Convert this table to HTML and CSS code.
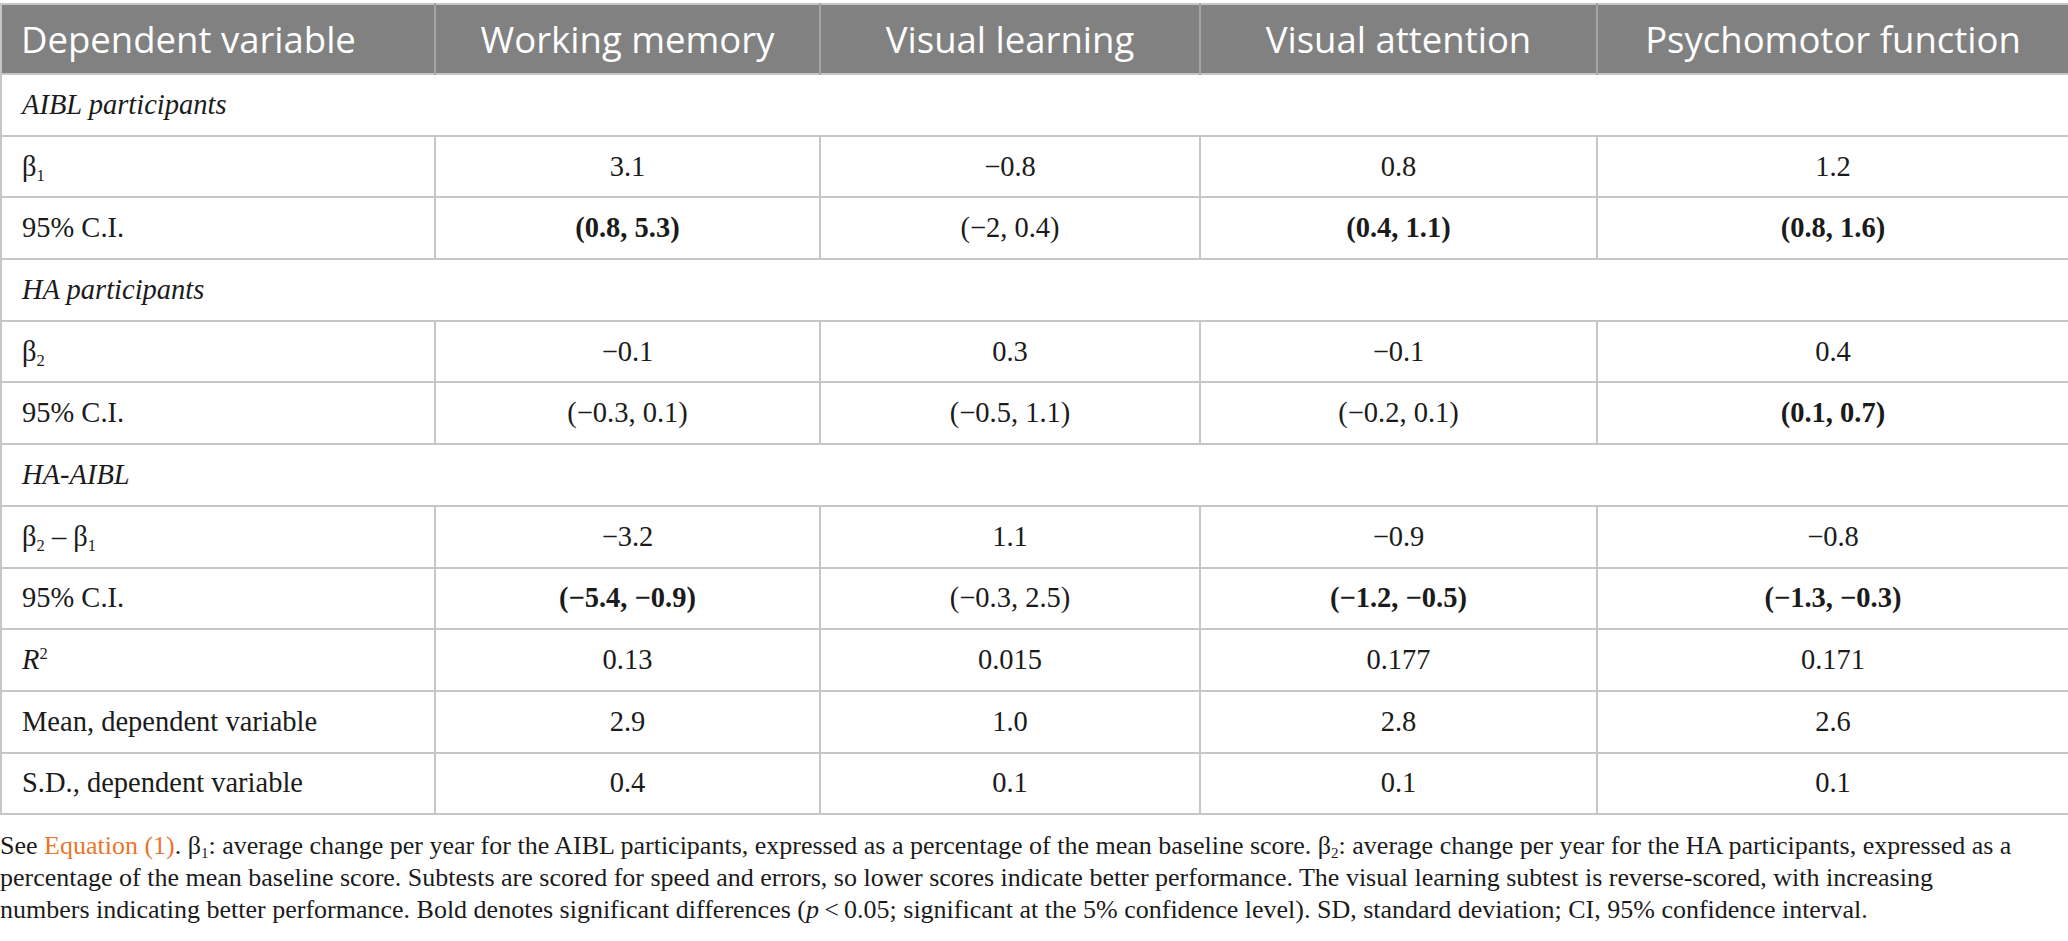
FILE: index.html
```html
<!DOCTYPE html>
<html lang="en">
<head>
    <meta charset="UTF-8">
    <meta name="viewport" content="width=device-width, initial-scale=1.0">
    <title>Table: annual change by subtest</title>
    <link rel="stylesheet" href="styles.css">
</head>
<body>
    <div class="table-wrap">
        <table class="data-table">
            <colgroup>
                <col class="col-label">
                <col class="col-wm">
                <col class="col-vl">
                <col class="col-va">
                <col class="col-pf">
            </colgroup>
            <thead>
                <tr>
                    <th class="first">Dependent variable</th>
                    <th>Working memory</th>
                    <th>Visual learning</th>
                    <th>Visual attention</th>
                    <th>Psychomotor function</th>
                </tr>
            </thead>
            <tbody>
                <!-- AIBL -->
                <tr class="section">
                    <td colspan="5">AIBL participants</td>
                </tr>
                <tr>
                    <td class="label">&beta;<sub>1</sub></td>
                    <td>3.1</td>
                    <td>&minus;0.8</td>
                    <td>0.8</td>
                    <td>1.2</td>
                </tr>
                <tr>
                    <td class="label">95% C.I.</td>
                    <td><b>(0.8, 5.3)</b></td>
                    <td>(&minus;2, 0.4)</td>
                    <td><b>(0.4, 1.1)</b></td>
                    <td><b>(0.8, 1.6)</b></td>
                </tr>

                <!-- HA -->
                <tr class="section">
                    <td colspan="5">HA participants</td>
                </tr>
                <tr>
                    <td class="label">&beta;<sub>2</sub></td>
                    <td>&minus;0.1</td>
                    <td>0.3</td>
                    <td>&minus;0.1</td>
                    <td>0.4</td>
                </tr>
                <tr>
                    <td class="label">95% C.I.</td>
                    <td>(&minus;0.3, 0.1)</td>
                    <td>(&minus;0.5, 1.1)</td>
                    <td>(&minus;0.2, 0.1)</td>
                    <td><b>(0.1, 0.7)</b></td>
                </tr>

                <!-- HA-AIBL -->
                <tr class="section">
                    <td colspan="5">HA-AIBL</td>
                </tr>
                <tr>
                    <td class="label">&beta;<sub>2</sub> &ndash; &beta;<sub>1</sub></td>
                    <td>&minus;3.2</td>
                    <td>1.1</td>
                    <td>&minus;0.9</td>
                    <td>&minus;0.8</td>
                </tr>
                <tr>
                    <td class="label">95% C.I.</td>
                    <td><b>(&minus;5.4, &minus;0.9)</b></td>
                    <td>(&minus;0.3, 2.5)</td>
                    <td><b>(&minus;1.2, &minus;0.5)</b></td>
                    <td><b>(&minus;1.3, &minus;0.3)</b></td>
                </tr>
                <tr>
                    <td class="label"><i>R</i><sup>2</sup></td>
                    <td>0.13</td>
                    <td>0.015</td>
                    <td>0.177</td>
                    <td>0.171</td>
                </tr>
                <tr>
                    <td class="label">Mean, dependent variable</td>
                    <td>2.9</td>
                    <td>1.0</td>
                    <td>2.8</td>
                    <td>2.6</td>
                </tr>
                <tr>
                    <td class="label">S.D., dependent variable</td>
                    <td>0.4</td>
                    <td>0.1</td>
                    <td>0.1</td>
                    <td>0.1</td>
                </tr>
            </tbody>
        </table>
    </div>

    <p class="footnote">See <a href="#" class="eq-link">Equation (1)</a>. &beta;<sub>1</sub>: average change per year for the AIBL participants, expressed as a percentage of the mean baseline score. &beta;<sub>2</sub>: average change per year for the HA participants, expressed as a<br>percentage of the mean baseline score. Subtests are scored for speed and errors, so lower scores indicate better performance. The visual learning subtest is reverse-scored, with increasing<br>numbers indicating better performance. Bold denotes significant differences (<i>p</i>&thinsp;&lt;&thinsp;0.05; significant at the 5% confidence level). SD, standard deviation; CI, 95% confidence interval.</p>
</body>
</html>
```

FILE: styles.css
```css
* {
    margin: 0;
    padding: 0;
    box-sizing: border-box;
}

body {
    font-family: 'Liberation Serif', 'Times New Roman', serif;
    color: #1b1b1b;
    background: #ffffff;
    padding-top: 3px;
}

/* テーブル */
.table-wrap {
    width: 2068px;
}

.data-table {
    width: 2068px;
    table-layout: fixed;
    border-collapse: collapse;
    border: 2px solid #c6c6c6;
}

.col-label { width: 434px; }
.col-wm { width: 385px; }
.col-vl { width: 380px; }
.col-va { width: 397px; }
.col-pf { width: 472px; }

.data-table th {
    height: 70px;
    background: #808180;
    color: #ffffff;
    font-family: 'Open Sans', 'Noto Sans', sans-serif;
    font-weight: 400;
    font-size: 36.5px;
    text-align: center;
    vertical-align: middle;
    border-left: 2px solid #a3a4a3;
    white-space: nowrap;
}

.data-table th.first {
    text-align: left;
    padding-left: 19px;
    border-left: none;
}

.data-table td {
    height: 61.7px;
    font-size: 28.5px;
    text-align: center;
    vertical-align: middle;
    border: 2px solid #c6c6c6;
    white-space: nowrap;
}

.data-table td.label {
    text-align: left;
    padding-left: 20px;
}

.data-table tr.section td {
    text-align: left;
    padding-left: 20px;
    font-style: italic;
}

.data-table b {
    font-weight: 700;
}

.data-table sub {
    font-size: 0.58em;
    vertical-align: -0.28em;
    line-height: 0;
}

.data-table sup {
    font-size: 0.58em;
    vertical-align: 0.62em;
    line-height: 0;
}

/* 注釈 */
.footnote {
    margin-top: 15px;
    font-size: 26px;
    line-height: 32px;
    width: 2068px;
}

.footnote sub {
    font-size: 0.58em;
    vertical-align: -0.25em;
    line-height: 0;
}

.eq-link {
    color: #e8762b;
    text-decoration: none;
}
```
